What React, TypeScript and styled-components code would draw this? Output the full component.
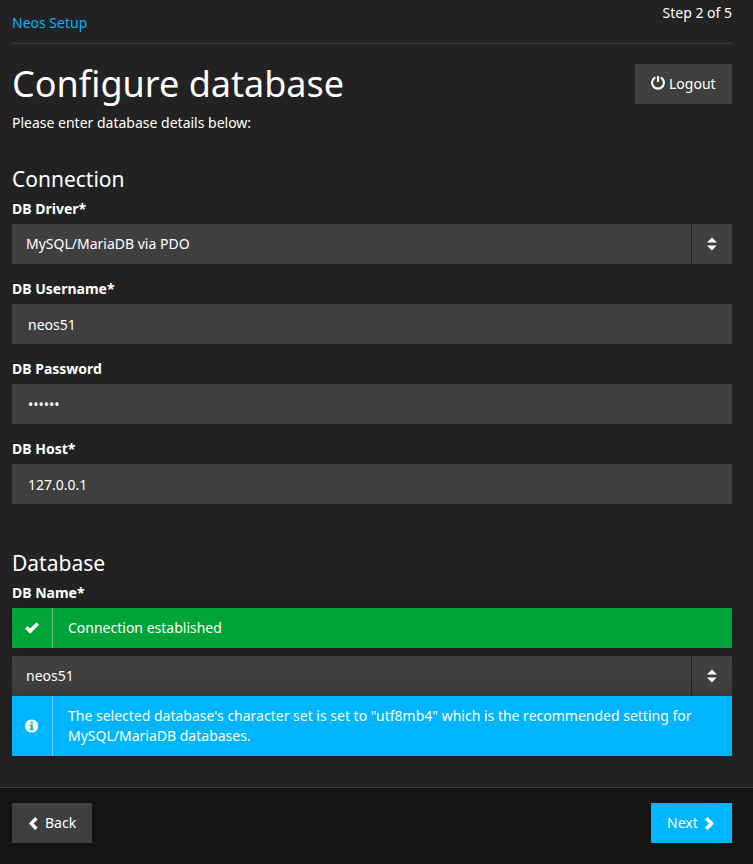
import React from "react";
import styled, { createGlobalStyle } from "styled-components";

const Global = createGlobalStyle`
  * { box-sizing: border-box; }
  body {
    margin: 0;
    background: #222;
    color: #fff;
    font: 14px/20px "Noto Sans", sans-serif;
    overflow: hidden;
  }
  h1, h2, p { margin: 0; font-weight: 400; }
`;

const Page = styled.div`
  display: flex;
  flex-direction: column;
  height: 864px;
`;

const Content = styled.main`
  flex: 1;
  padding: 0 21px 0 12px;
`;

const Navbar = styled.header`
  display: flex;
  justify-content: space-between;
  height: 44px;
  border-bottom: 1px solid #3f3f3f;
  border-radius: 4px;
`;

const Brand = styled.a`
  padding-top: 13px;
  color: #00b5ff;
`;

const Step = styled.span`
  padding-top: 3px;
`;

const TitleRow = styled.div`
  display: flex;
  justify-content: space-between;
  align-items: flex-start;
  height: 69px;
  padding-top: 20px;
`;

const Title = styled.h1`
  font-size: 36px;
  line-height: 40px;
`;

const Button = styled.button<{ $primary?: boolean; $width: number }>`
  display: flex;
  align-items: center;
  justify-content: flex-start;
  width: ${(p) => p.$width}px;
  height: 40px;
  padding: 0 16px;
  border: 0;
  background: ${(p) => (p.$primary ? "#00b5ff" : "#3f3f3f")};
  color: #fff;
  font: inherit;
`;

const Section = styled.section<{ $gap: number }>`
  padding-top: ${(p) => p.$gap}px;
`;

const SectionTitle = styled.h2`
  font-size: 21px;
  line-height: 40px;
`;

const Field = styled.div`
  & + & { margin-top: 15px; }
`;

const Label = styled.label`
  display: block;
  height: 25px;
  line-height: 20px;
  font-weight: 700;
`;

const Input = styled.input`
  display: block;
  width: 100%;
  height: 40px;
  padding: 0 16px;
  border: 0;
  border-radius: 0;
  outline: 0;
  background: #3f3f3f;
  color: #fff;
  font: inherit;
`;

const SelectBox = styled.div`
  display: flex;
  height: 40px;
  background: #3f3f3f;
`;

const SelectValue = styled.span`
  flex: 1;
  padding: 10px 14px;
`;

const SelectToggle = styled.span`
  display: flex;
  align-items: center;
  justify-content: center;
  width: 41px;
  border-left: 1px solid #222;
`;

const Alert = styled.div<{ $color: string; $gap?: number }>`
  display: flex;
  margin-bottom: ${(p) => p.$gap ?? 0}px;
  background: ${(p) => p.$color};
  box-shadow: 0 0 15px rgba(0, 0, 0, 0.2);
`;

const AlertIcon = styled.span`
  display: flex;
  align-items: center;
  justify-content: center;
  width: 41px;
  border-right: 1px solid rgba(255, 255, 255, 0.4);
`;

const AlertText = styled.p`
  flex: 1;
  padding: 10px 14px 10px 15px;
`;

const Footer = styled.footer`
  display: flex;
  justify-content: space-between;
  height: 77px;
  padding: 15px 21px 0 12px;
  border-top: 1px solid #3f3f3f;
  background: #141414;
`;

const Glyph = styled.svg<{ $before?: number; $after?: number }>`
  display: block;
  flex: none;
  margin-left: ${(p) => p.$before ?? 0}px;
  margin-right: ${(p) => p.$after ?? 0}px;
`;

const PowerIcon = () => (
  <Glyph $after={4} width="14" height="16" viewBox="0 0 14 16" fill="none" stroke="#fff" strokeWidth="2.1">
    <path d="M4.3 1.5a5.9 5.9 0 1 0 5.4 0" />
    <path d="M7 0v6" />
  </Glyph>
);

const SortIcon = () => (
  <Glyph width="10" height="14" viewBox="0 0 10 14" fill="#fff">
    <path d="M5 0.5 10 5.5H0ZM0 8.5h9.6L4.8 13.5Z" />
  </Glyph>
);

const CheckIcon = () => (
  <Glyph width="14" height="12" viewBox="0 0 14 12" fill="#fff">
    <path d="M0 6.4 2.4 4 5.2 6.6 11.6 0.3 14 2.8 5.2 11.7Z" />
  </Glyph>
);

const InfoIcon = () => (
  <Glyph width="14" height="14" viewBox="0 0 14 14">
    <circle cx="6.6" cy="7" r="6.6" fill="#fff" />
    <path d="M5.6 2.5h2.2v2H5.6ZM4.5 5.6h3.3v4.2h1v1.5H4.5V9.8h1.1V7.1H4.5Z" fill="#00b5ff" />
  </Glyph>
);

const BackIcon = () => (
  <Glyph $before={1} $after={7} width="9" height="13" viewBox="0 0 9 13" fill="#fff">
    <path d="M6.1 0 8.6 2.4 4.6 6.5 8.6 10.6 6.1 13 0 6.5Z" />
  </Glyph>
);

const NextIcon = () => (
  <Glyph $before={7} width="9" height="13" viewBox="0 0 9 13" fill="#fff">
    <path d="M2.6 0 0 2.5 4 6.5 0 10.5 2.6 13 9 6.5Z" />
  </Glyph>
);

const Select = ({ value }: { value: string }) => (
  <SelectBox>
    <SelectValue>{value}</SelectValue>
    <SelectToggle><SortIcon /></SelectToggle>
  </SelectBox>
);

export default function App() {
  return (
    <Page>
      <Global />
      <Content>
        <Navbar>
          <Brand>Neos Setup</Brand>
          <Step>Step 2 of 5</Step>
        </Navbar>
        <TitleRow>
          <Title>Configure database</Title>
          <Button $width={97}><PowerIcon />Logout</Button>
        </TitleRow>
        <p>Please enter database details below:</p>
        <Section $gap={26}>
          <SectionTitle>Connection</SectionTitle>
          <Field>
            <Label>DB Driver*</Label>
            <Select value="MySQL/MariaDB via PDO" />
          </Field>
          <Field>
            <Label>DB Username*</Label>
            <Input defaultValue="neos51" />
          </Field>
          <Field>
            <Label>DB Password</Label>
            <Input defaultValue="••••••" />
          </Field>
          <Field>
            <Label>DB Host*</Label>
            <Input defaultValue="127.0.0.1" />
          </Field>
        </Section>
        <Section $gap={39}>
          <SectionTitle>Database</SectionTitle>
          <Field>
            <Label>DB Name*</Label>
            <Alert $color="#00a338" $gap={8}>
              <AlertIcon><CheckIcon /></AlertIcon>
              <AlertText>Connection established</AlertText>
            </Alert>
            <Select value="neos51" />
            <Alert $color="#00b5ff">
              <AlertIcon><InfoIcon /></AlertIcon>
              <AlertText>
                The selected database's character set is set to "utf8mb4" which is the recommended setting for
                MySQL/MariaDB databases.
              </AlertText>
            </Alert>
          </Field>
        </Section>
      </Content>
      <Footer>
        <Button $width={80}><BackIcon />Back</Button>
        <Button $width={81} $primary>Next<NextIcon /></Button>
      </Footer>
    </Page>
  );
}
